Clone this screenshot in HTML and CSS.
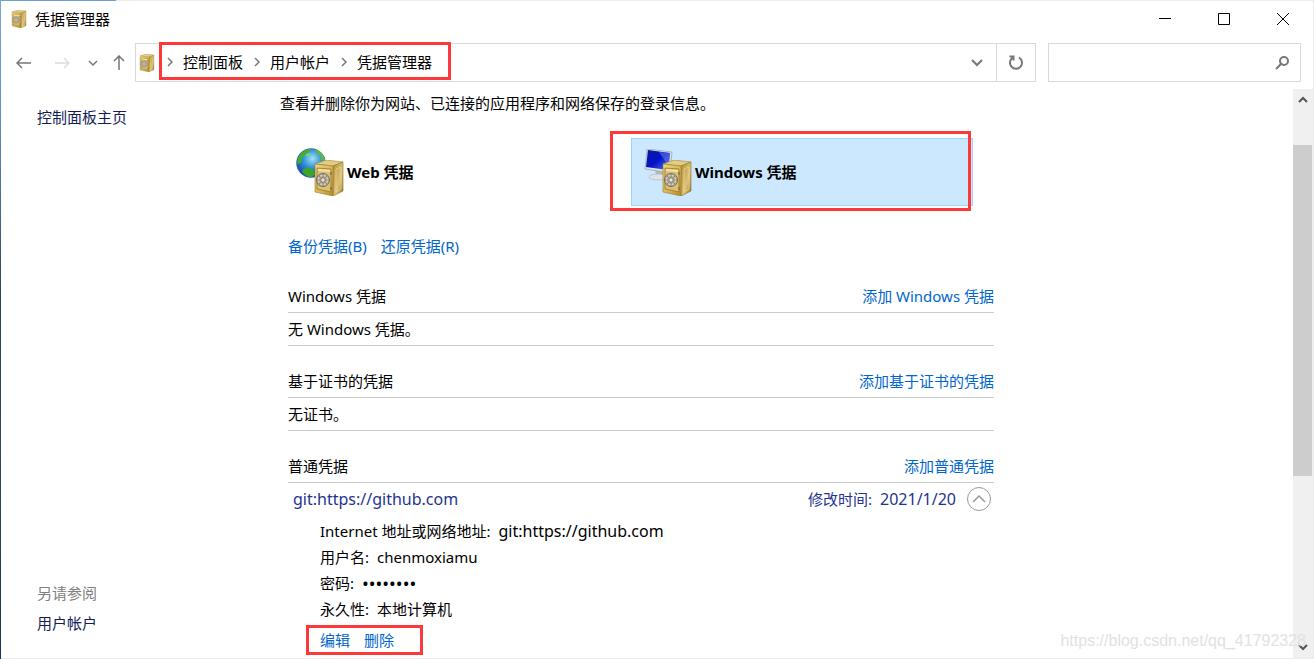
FILE: index.html
```html
<!DOCTYPE html>
<html lang="zh-CN">
<head>
<meta charset="UTF-8">
<meta name="viewport" content="width=device-width, initial-scale=1.0">
<link rel="stylesheet" href="styles.css">
<title>凭据管理器</title>
</head>
<body>
<!-- shared icon shapes -->
<svg class="defs" aria-hidden="true">
  <defs>
    <linearGradient id="gold" x1="0" y1="0" x2="1" y2="1">
      <stop offset="0" stop-color="#ecd68a"/>
      <stop offset="0.6" stop-color="#d6b455"/>
      <stop offset="1" stop-color="#b08a2c"/>
    </linearGradient>
    <linearGradient id="goldSide" x1="0" y1="0" x2="1" y2="1">
      <stop offset="0" stop-color="#b58f35"/>
      <stop offset="0.6" stop-color="#dcc27a"/>
      <stop offset="1" stop-color="#94701c"/>
    </linearGradient>
    <radialGradient id="ocean" cx="0.55" cy="0.35" r="0.65">
      <stop offset="0" stop-color="#9fe4f8"/>
      <stop offset="0.5" stop-color="#2f8fd6"/>
      <stop offset="1" stop-color="#1448a0"/>
    </radialGradient>
    <linearGradient id="screen" x1="0" y1="0" x2="1" y2="1">
      <stop offset="0" stop-color="#0a1a9c"/>
      <stop offset="0.5" stop-color="#0512c8"/>
      <stop offset="1" stop-color="#4f78f0"/>
    </linearGradient>
    <symbol id="safe" viewBox="0 0 30 36">
      <path d="M1 4 12 0l17 2-10 4z" fill="#e3cc84" stroke="#a88430" stroke-width=".6"/>
      <path d="M19 6l10-4v29l-10 5z" fill="url(#goldSide)" stroke="#94701c" stroke-width=".6"/>
      <path d="M22 9l5-2v22l-5 3z" fill="none" stroke="#ecd99c" stroke-width=".7"/>
      <path d="M1 4l18 2v30L1 32z" fill="url(#gold)" stroke="#a07a24" stroke-width=".6"/>
      <path d="M3 8l14 1v23L3 29z" fill="#dcc06a" stroke="#9a7726" stroke-width=".8"/>
      <path d="M4 9l12 1v2L4 11z" fill="#f3e3a8"/>
      <circle cx="9" cy="20" r="6.500" fill="#b9b5a8" stroke="#6f6d68"/>
      <circle cx="9" cy="20" r="4.500" fill="#cfad58" stroke="#e8e8e4"/>
      <path d="M9 14v12M3 20h12M5 16l8 8M13 16l-8 8" stroke="#8a8a88" stroke-width="1.200"/>
      <circle cx="9" cy="20" r="2" fill="#e6e6e6" stroke="#777" stroke-width=".6"/>
      <path d="M17 12v3M17 27v3" stroke="#76746c" stroke-width="1.500"/>
    </symbol>
    <symbol id="globe" viewBox="0 0 30 30">
      <circle cx="15" cy="15" r="14.500" fill="url(#ocean)" stroke="#3a6a94" stroke-width=".6"/>
      <path d="M2 10C5 4 10 1 15 1l-2 3-4 2-1 3-2 1-1 5-4 1z" fill="#45ad32"/>
      <path d="M19 1c5 2 9 6 10 11l-3 1-2-5-3-2z" fill="#5cba42"/>
      <path d="M6 23c3-4 8-4 11-1l2 4-3 3c-5 0-8-2-10-6z" fill="#3da52c"/>
      <path d="M9 8l3-3 3 1-3 2z" fill="#8bd84f"/>
    </symbol>
    <symbol id="monitor" viewBox="0 0 30 32">
      <path d="M11 20l8 2 1 6-8-1z" fill="#b4b9be"/>
      <ellipse cx="14" cy="28" rx="9" ry="3" fill="#dfe3e6" stroke="#a9afb4" stroke-width=".6"/>
      <path d="M3 0l25 3-2 21L1 20z" fill="#dbe0e4" stroke="#8d959c" stroke-width=".6"/>
      <path d="M4 1l22 3-2 17-22-3z" fill="url(#screen)"/>
      <path d="M15 3l11 1-1 14z" fill="#5a78e8" opacity=".6"/>
    </symbol>
  </defs>
</svg>

<div class="window">
  <header class="title-bar">
    <svg class="small-icon"><use href="#safe"/></svg>
    <h1 class="title">凭据管理器</h1>
    <button class="window-button" aria-label="最小化">
      <svg width="12" height="12"><path d="M0 5.500h12" stroke="#000"/></svg>
    </button>
    <button class="window-button" aria-label="最大化">
      <svg width="12" height="12"><path d="M.5.5h11v11H.5z" fill="none" stroke="#000"/></svg>
    </button>
    <button class="window-button" aria-label="关闭">
      <svg width="12" height="12"><path d="M0 0l12 12M12 0L0 12" stroke="#000"/></svg>
    </button>
  </header>

  <nav class="nav-bar">
    <button class="nav-button" aria-label="后退">
      <svg width="16" height="12"><path d="M15 6H1M6 1L1 6l5 5" class="stroke"/></svg>
    </button>
    <button class="nav-button nav-disabled" aria-label="前进" disabled>
      <svg width="16" height="12"><path d="M1 6h14M10 1l5 5-5 5" class="stroke"/></svg>
    </button>
    <button class="nav-button nav-recent" aria-label="最近的位置">
      <svg width="10" height="8"><path d="M1 2l4 4 4-4" class="stroke"/></svg>
    </button>
    <button class="nav-button nav-up" aria-label="上移">
      <svg width="12" height="16"><path d="M6 15V1M1 6l5-5 5 5" class="stroke"/></svg>
    </button>
    <div class="address">
      <svg class="small-icon"><use href="#safe"/></svg>
      <div class="crumbs">
        <svg width="6" height="10"><path d="M1 1l4 4-4 4" class="stroke"/></svg>
        <a href="#">控制面板</a>
        <svg width="6" height="10"><path d="M1 1l4 4-4 4" class="stroke"/></svg>
        <a href="#">用户帐户</a>
        <svg width="6" height="10"><path d="M1 1l4 4-4 4" class="stroke"/></svg>
        <a href="#">凭据管理器</a>
      </div>
      <button class="address-button" aria-label="以前的位置">
        <svg width="12" height="8"><path d="M1 1l5 5 5-5" class="stroke stroke-bold"/></svg>
      </button>
      <button class="address-button refresh" aria-label="刷新">
        <svg width="16" height="16"><path d="M11 2.500a6 6 0 1 1-6 0M1.500 1.500h4v4" class="stroke stroke-bold"/></svg>
      </button>
    </div>
    <div class="search">
      <input type="text" aria-label="搜索控制面板">
      <svg width="14" height="14"><path d="M1 13l6-6" class="stroke stroke-bold"/><circle cx="9" cy="5" r="4" class="stroke stroke-bold"/></svg>
    </div>
  </nav>

  <div class="content">
    <aside class="sidebar">
      <a href="#">控制面板主页</a>
      <div class="see-also">
        <span class="see-also-title">另请参阅</span>
        <a href="#">用户帐户</a>
      </div>
    </aside>

    <main class="main">
      <p class="intro">查看并删除你为网站、已连接的应用程序和网络保存的登录信息。</p>

      <div class="tiles">
        <button class="tile">
          <svg class="tile-icon" viewBox="0 0 48 48">
            <use href="#globe" width="30" height="30"/>
            <use href="#safe" x="18" y="12" width="30" height="36"/>
          </svg>
          Web 凭据
        </button>
        <div class="tile-marked">
          <button class="tile tile-selected">
            <svg class="tile-icon" viewBox="0 0 48 48">
              <use href="#monitor" y="1" width="30" height="32"/>
              <use href="#safe" x="18" y="12" width="30" height="36"/>
            </svg>
            Windows 凭据
          </button>
        </div>
      </div>

      <div class="vault">
        <div class="vault-links">
          <a href="#">备份凭据(B)</a>
          <a href="#">还原凭据(R)</a>
        </div>

        <section class="group">
          <div class="row"><h2>Windows 凭据</h2><a href="#">添加 Windows 凭据</a></div>
          <p class="row">无 Windows 凭据。</p>
        </section>

        <section class="group">
          <div class="row"><h2>基于证书的凭据</h2><a href="#">添加基于证书的凭据</a></div>
          <p class="row">无证书。</p>
        </section>

        <section class="group">
          <div class="row"><h2>普通凭据</h2><a href="#">添加普通凭据</a></div>
          <div class="credential">
            <span class="credential-name latin">git:https://github.com</span>
            <span>修改时间:</span>
            <span class="latin">2021/1/20</span>
            <button class="collapse" aria-label="折叠" aria-expanded="true">
              <svg width="14" height="8"><path d="M1 7l6-6 6 6" fill="none" stroke="#999" stroke-width="1.500"/></svg>
            </button>
          </div>
          <dl class="details">
            <div><dt>Internet 地址或网络地址:</dt><dd class="latin">git:https://github.com</dd></div>
            <div><dt>用户名:</dt><dd>chenmoxiamu</dd></div>
            <div><dt>密码:</dt><dd class="password">••••••••</dd></div>
            <div><dt>永久性:</dt><dd>本地计算机</dd></div>
          </dl>
          <div class="actions">
            <a href="#">编辑</a>
            <a href="#">删除</a>
          </div>
        </section>
      </div>
    </main>

    <div class="scrollbar">
      <svg width="10" height="8"><path d="M1 6l4-4 4 4" class="scroll-arrow"/></svg>
      <div class="track"><div class="thumb"></div></div>
      <svg width="10" height="8"><path d="M1 2l4 4 4-4" class="scroll-arrow"/></svg>
    </div>
  </div>
</div>
<div class="watermark">https://blog.csdn.net/qq_41792328</div>
</body>
</html>
```
FILE: styles.css
```css
* {
  box-sizing: border-box;
}
body {
  margin: 0;
  position: relative;
  min-height: 100vh;
  padding: 1px;
  font-family: "Noto Sans", "Noto Sans CJK SC", sans-serif;
  font-size: 15px;
  line-height: 20px;
  color: #000;
  /* desktop showing round the window */
  background:
    linear-gradient(90deg, #6f9fd0 116px, transparent 116px) top / 100% 1px no-repeat,
    linear-gradient(#7ba6d8, #5f8fc4 120px, #2c4258 300px, #34495a 450px, #1c3458) left / 1px 100% no-repeat,
    #ececec;
}
a {
  color: #0066cc;
  text-decoration: none;
}
button {
  padding: 0;
  border: 0;
  background: none;
  font: inherit;
  color: inherit;
}
h1, h2, p, dl, dd {
  margin: 0;
  font-size: 15px;
  font-weight: normal;
}
.defs {
  position: absolute;
  width: 0;
  height: 0;
}
.window {
  display: flex;
  flex-direction: column;
  min-height: calc(100vh - 2px);
  background: #fff;
}
.stroke {
  fill: none;
  stroke: #777;
  stroke-width: 1.5;
}
.stroke-bold {
  stroke-width: 2;
}
.small-icon {
  width: 16px;
  height: 18px;
}
.latin {
  font-size: 16px;
}

/* title bar */
.title-bar {
  display: flex;
  align-items: center;
  height: 36px;
  padding-left: 10px;
  padding-right: 1px;
}
.title {
  flex: 1;
  margin-left: 8px;
}
.window-button {
  display: flex;
  align-items: center;
  justify-content: center;
  width: 59px;
  height: 36px;
}

/* navigation */
.nav-bar {
  display: flex;
  align-items: center;
  padding: 6px 12px 7px 4px;
}
.nav-button {
  display: flex;
  align-items: center;
  justify-content: center;
  width: 38px;
  height: 39px;
}
.nav-recent {
  width: 24px;
}
.nav-up {
  width: 30px;
  padding-right: 2px;
}
.nav-disabled .stroke {
  stroke: #ddd;
}
.address {
  display: flex;
  flex: 1;
  align-items: center;
  height: 39px;
  padding-left: 3px;
  border: 1px solid #d9d9d9;
}
.crumbs {
  display: flex;
  align-items: center;
  gap: 10px;
  height: 38px;
  margin-left: 4px;
  margin-right: auto;
  margin-bottom: 3px;
  padding: 2px 15px 0 5px;
  border: 3px solid #fc3838;
}
.crumbs a {
  color: #000;
}
.crumbs svg + a {
  margin-right: 1px;
}
.address-button {
  display: flex;
  align-items: center;
  justify-content: center;
  width: 39px;
  height: 37px;
}
.refresh {
  border-left: 1px solid #d9d9d9;
}
.search {
  display: flex;
  align-items: center;
  width: 253px;
  height: 39px;
  margin-left: 12px;
  padding-right: 11px;
  border: 1px solid #d9d9d9;
}
.search input {
  flex: 1;
  min-width: 0;
  border: 0;
  outline: 0;
  font: inherit;
}

/* content */
.content {
  display: flex;
  flex: 1;
}
.sidebar {
  display: flex;
  flex-direction: column;
  justify-content: space-between;
  width: 279px;
  padding: 18px 36px 25px;
}
.sidebar a {
  color: #151c55;
}
.see-also {
  display: flex;
  flex-direction: column;
  gap: 10px;
}
.see-also-title {
  color: #808080;
}
.main {
  flex: 1;
  padding: 4px 0 3px;
}
.tiles {
  display: flex;
  gap: 6px;
  margin: 25px 0 0 3px;
}
.tile {
  display: flex;
  align-items: center;
  gap: 3px;
  width: 342px;
  height: 68px;
  padding-left: 12px;
  padding-bottom: 1px;
  border: 1px solid transparent;
  font-weight: bold;
}
.tile-icon {
  width: 48px;
  height: 48px;
}
.tile-selected {
  background: #cce8ff;
  border-color: #99d1ff;
}
.tile-marked {
  position: relative;
}
/* red marker drawn over the tile */
.tile-marked::after {
  content: "";
  position: absolute;
  top: -7px;
  right: 2px;
  bottom: -5px;
  left: -21px;
  border: 3px solid #fc3838;
  pointer-events: none;
}
.vault {
  max-width: 714px;
  padding-left: 8px;
}
.vault-links {
  display: flex;
  gap: 14px;
  margin: 30px 0 24px;
}
.group {
  margin-bottom: 19px;
}
.group:last-child {
  margin-bottom: 0;
}
.row {
  display: flex;
  align-items: center;
  justify-content: space-between;
  height: 33px;
  border-bottom: 1px solid #ccc;
}
.credential {
  display: flex;
  align-items: center;
  gap: 8px;
  height: 32px;
  padding: 0 3px 0 5px;
  color: #1f3390;
}
.credential-name {
  margin-right: auto;
}
.collapse {
  display: flex;
  align-items: center;
  justify-content: center;
  width: 24px;
  height: 24px;
  margin-left: 3px;
  border: 1px solid #999;
  border-radius: 50%;
}
.details {
  padding: 3px 0 0 32px;
  line-height: 26px;
}
.details div {
  display: flex;
  gap: 8px;
  height: 26px;
}
.password {
  font-size: 18px;
}
.actions {
  display: flex;
  align-items: center;
  gap: 14px;
  width: 117px;
  height: 30px;
  margin: 3px 0 0 18px;
  padding-left: 11px;
  border: 3px solid #fc3838;
}

/* scrollbar */
.scrollbar {
  display: flex;
  flex-direction: column;
  align-items: center;
  width: 20px;
  padding: 7px 0;
  background: #f0f0f0;
}
.track {
  display: grid;
  flex: 1;
  grid-template-rows: 41fr 332fr 167fr;
  width: 100%;
}
.thumb {
  grid-row: 2;
  margin-right: 1px;
  background: #cdcdcd;
}
.scroll-arrow {
  fill: none;
  stroke: #555;
  stroke-width: 2;
}
.watermark {
  position: absolute;
  right: 8px;
  bottom: 8px;
  font-family: "Liberation Sans", sans-serif;
  font-size: 16px;
  color: #e2e2e2;
}
```
